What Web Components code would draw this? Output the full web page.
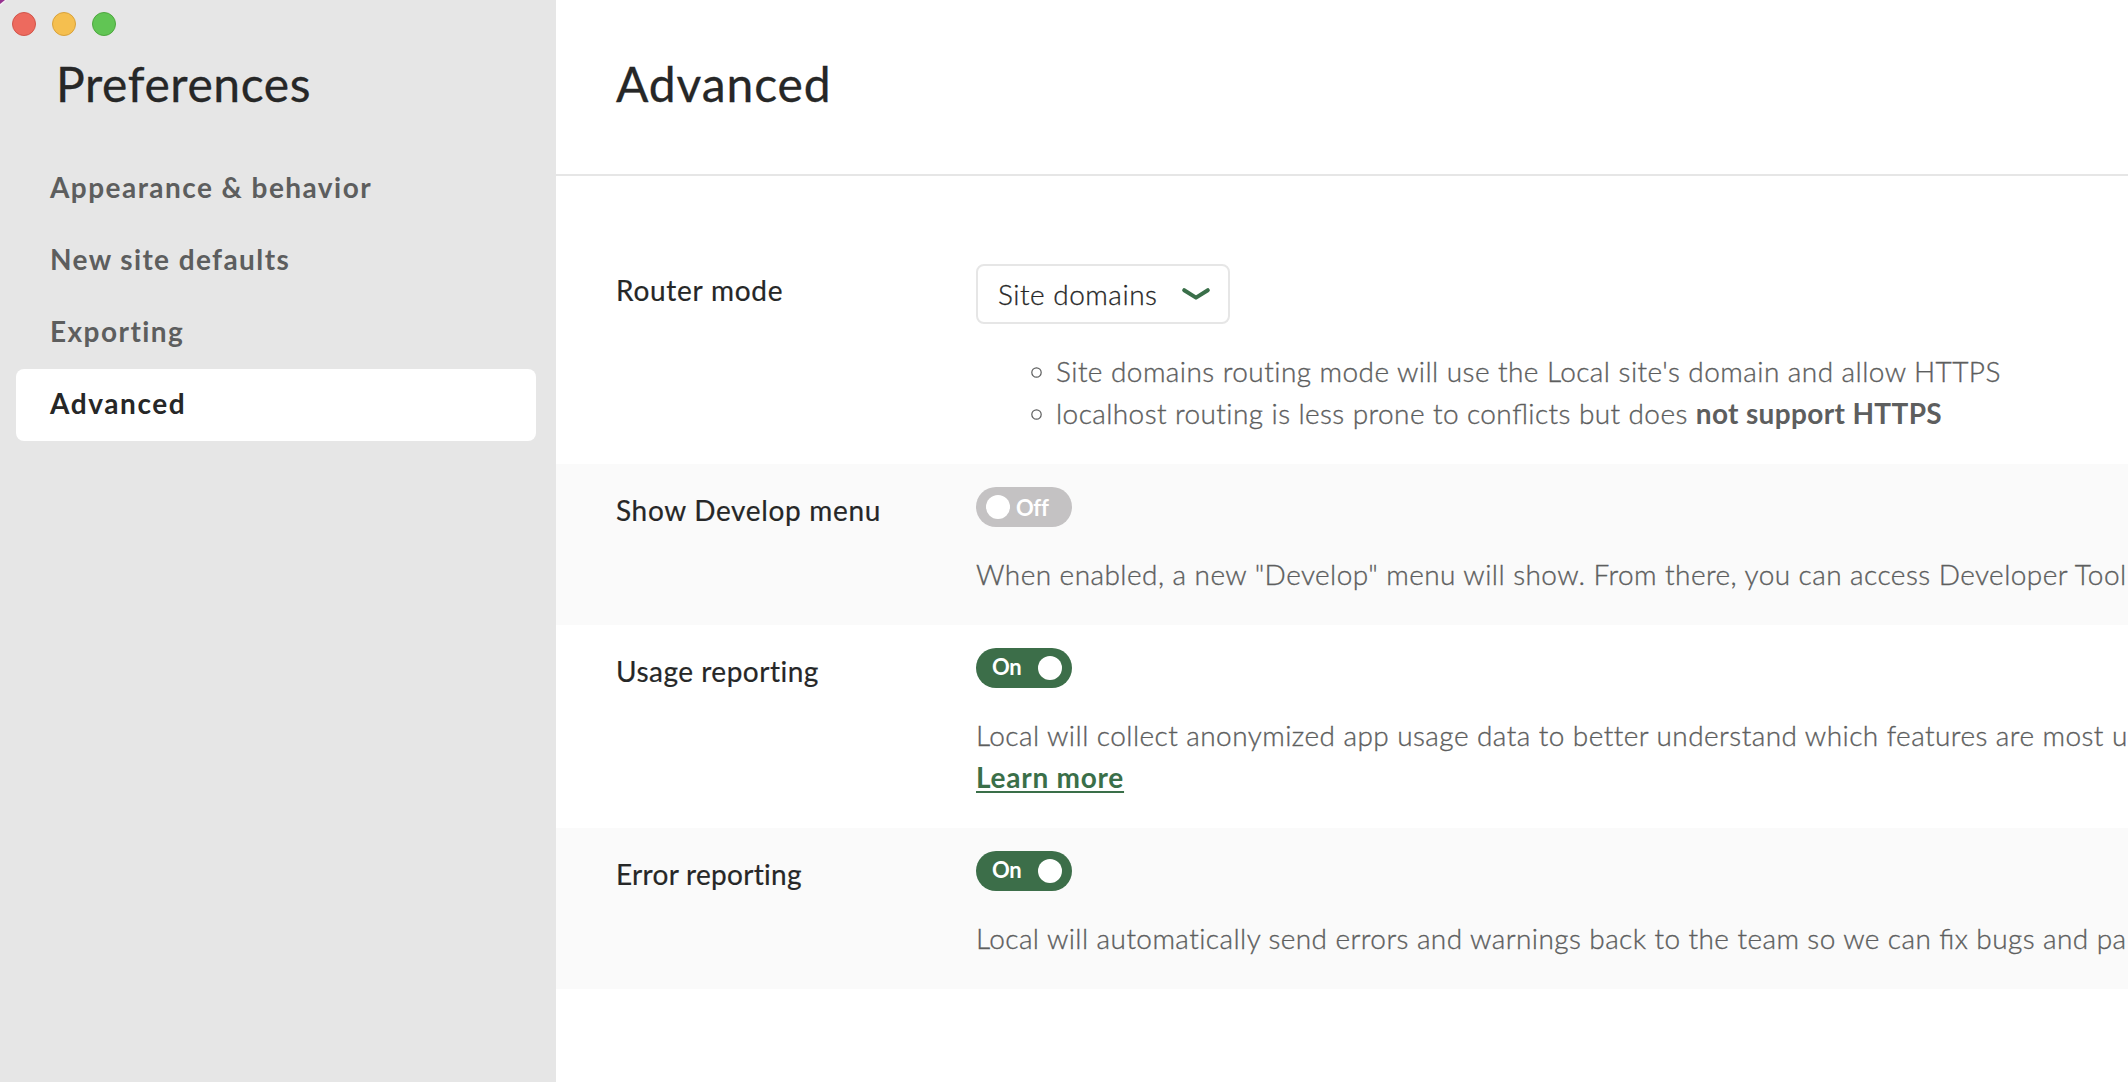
<!DOCTYPE html>
<html lang="en">
<head>
<meta charset="utf-8">
<title>Preferences</title>
<style>
html, body { margin: 0; height: 100%; overflow: hidden; background: #fff; }
body { font-family: Lato, "Open Sans", sans-serif; font-size: 28px; line-height: 42px; color: #262727; }
b { font-weight: 700; letter-spacing: .35px; -webkit-text-stroke: 0; }
.lig { font-feature-settings: "liga" 1; }
a { color: #3a6f49; font-weight: 700; letter-spacing: .75px; -webkit-text-stroke: 0; text-decoration: underline; text-decoration-thickness: 2px; text-underline-offset: 3px; text-decoration-skip-ink: none; }
</style>
</head>
<body>
<prefs-window>
  <prefs-sidebar slot="side" heading="Preferences">
    <nav-item>Appearance &amp; behavior</nav-item>
    <nav-item style="letter-spacing:1.4px">New site defaults</nav-item>
    <nav-item>Exporting</nav-item>
    <nav-item style="letter-spacing:1.6px" active>Advanced</nav-item>
  </prefs-sidebar>
  <prefs-panel heading="Advanced">
    <pref-row first label="Router mode" style="--label-ls:.75px">
      <select-box slot="control">Site domains</select-box>
      <bullet-list>
        <bullet-item>Site domains routing mode will use the Local site's domain and allow HTTPS</bullet-item>
        <bullet-item style="letter-spacing:.41px">localhost routing is less prone to con<span class="lig">fl</span>icts but does <b>not support HTTPS</b></bullet-item>
      </bullet-list>
    </pref-row>
    <pref-row shaded label="Show Develop menu" style="--label-ls:.67px">
      <toggle-switch slot="control">Off</toggle-switch>
      When enabled, a new "Develop" menu will show. From there, you can access Developer Tool
    </pref-row>
    <pref-row label="Usage reporting" style="--label-ls:.5px">
      <toggle-switch slot="control" on>On</toggle-switch>
      Local will collect anonymized app usage data to better understand which features are most u<br><a>Learn more</a>
    </pref-row>
    <pref-row shaded label="Error reporting" style="--label-ls:.3px;--desc-ls:.42px">
      <toggle-switch slot="control" on>On</toggle-switch>
      Local will automatically send errors and warnings back to the team so we can <span class="lig">fi</span>x bugs and pa
    </pref-row>
  </prefs-panel>
</prefs-window>
<script>
const define = (name, html) => {
  const template = document.createElement('template');
  template.innerHTML = html;
  customElements.define(name, class extends HTMLElement {
    constructor() {
      super();
      this.attachShadow({ mode: 'open' }).append(template.content.cloneNode(true));
    }
    connectedCallback() {
      for (const el of this.shadowRoot.querySelectorAll('[data-attr]'))
        el.textContent = this.getAttribute(el.dataset.attr);
    }
  });
};

define('prefs-window', `
<style>
:host { display: grid; grid-template-columns: 556px minmax(0, 1fr); height: 100vh; }
</style>
<slot name="side"></slot><slot></slot>`);

define('traffic-lights', `
<style>
:host { display: flex; gap: 16px; padding: 12px 12px 0; }
i { box-sizing: border-box; width: 24px; height: 24px; border-radius: 50%; border: 1px solid; }
.close { background: #ed6a5e; border-color: #d1554a; }
.min { background: #f5bf4f; border-color: #d8a23c; }
.max { background: #61c554; border-color: #4ea73f; }
</style>
<i class="close"></i><i class="min"></i><i class="max"></i>`);

define('prefs-sidebar', `
<style>
:host { display: flex; flex-direction: column; position: relative; background: #e6e6e6; }
.corner { position: absolute; left: 0; top: 0; }
h1 { margin: 18px 0 39px; padding-left: 56px; font-size: 48px; line-height: 60px; font-weight: 400; letter-spacing: .6px; -webkit-text-stroke: .3px; }
nav { display: flex; flex-direction: column; padding: 0 20px 0 16px; }
</style>
<svg class="corner" width="8" height="8" viewBox="0 0 8 8"><path d="M0 0H7L0 6Z" fill="#f4eef4"/><path d="M0 0H5L0 4Z" fill="#96318f"/></svg>
<traffic-lights></traffic-lights>
<h1 data-attr="heading"></h1>
<nav><slot></slot></nav>`);

define('nav-item', `
<style>
:host { display: block; box-sizing: border-box; height: 72px; padding: 0 34px 4px; line-height: 68px; border-radius: 8px; font-weight: 700; letter-spacing: 1.45px; color: #5d5e5e; }
:host([active]) { background: #fff; color: #262727; }
</style>
<slot></slot>`);

define('prefs-panel', `
<style>
:host { display: flex; flex-direction: column; background: #fff; }
header { box-sizing: border-box; height: 176px; padding: 54px 60px 0; border-bottom: 2px solid #e6e6e6; }
h2 { margin: 0; font-size: 48px; line-height: 60px; font-weight: 400; letter-spacing: .88px; -webkit-text-stroke: .3px; }
</style>
<header><h2 data-attr="heading"></h2></header>
<slot></slot>`);

define('pref-row', `
<style>
:host { display: grid; grid-template-columns: 360px minmax(0, 1fr); padding: 23px 0 30px 60px; }
:host([first]) { padding-top: 88px; }
:host([shaded]) { background: #fafafa; }
.label { padding-top: 2px; letter-spacing: var(--label-ls, .5px); -webkit-text-stroke: .2px; }
:host([first]) .label { padding-top: 5px; }
.value { display: flex; flex-direction: column; align-items: flex-start; gap: 26px; }
.desc { white-space: nowrap; font-weight: 300; letter-spacing: var(--desc-ls, .44px); color: #5d5e5e; -webkit-text-stroke: .35px; }
</style>
<div class="label" data-attr="label"></div>
<div class="value"><slot name="control"></slot><div class="desc"><slot></slot></div></div>`);

define('select-box', `
<style>
:host { display: flex; box-sizing: border-box; align-items: center; justify-content: space-between; width: 254px; height: 60px; padding: 0 18px 0 20px; border: 2px solid #e6e6e6; border-radius: 8px; font-weight: 300; letter-spacing: .5px; -webkit-text-stroke: .3px; }
</style>
<span><slot></slot></span>
<svg width="28" height="12" viewBox="0 0 28 12" fill="none" stroke="#3a6f49" stroke-width="4" stroke-linecap="round" stroke-linejoin="round"><path d="M2.2 2.2L14 9.6L25.8 2.2"/></svg>`);

define('toggle-switch', `
<style>
:host { display: flex; box-sizing: border-box; align-items: center; gap: 6px; width: 96px; height: 40px; padding: 0 10px; border-radius: 20px; background: #c4c2c3; color: #fff; font-size: 22px; font-weight: 700; line-height: 40px; letter-spacing: -.3px; }
:host([on]) { flex-direction: row-reverse; justify-content: space-between; padding-left: 16px; background: #3c6e49; }
i { width: 24px; height: 24px; border-radius: 50%; background: #fff; }
span { padding-top: 1px; }
:host([on]) span { padding: 0 0 2px; }
</style>
<i></i><span><slot></slot></span>`);

define('bullet-list', `
<style>
:host { display: flex; flex-direction: column; padding-left: 55px; }
</style>
<slot></slot>`);

define('bullet-item', `
<style>
:host { display: flex; align-items: center; gap: 14px; }
svg { margin-top: 3px; }
</style>
<svg width="11" height="11" viewBox="0 0 11 11" fill="none" stroke="#5d5e5e" stroke-width="1.2"><circle cx="5.5" cy="5.5" r="4.7"/></svg>
<div><slot></slot></div>`);
</script>
</body>
</html>
